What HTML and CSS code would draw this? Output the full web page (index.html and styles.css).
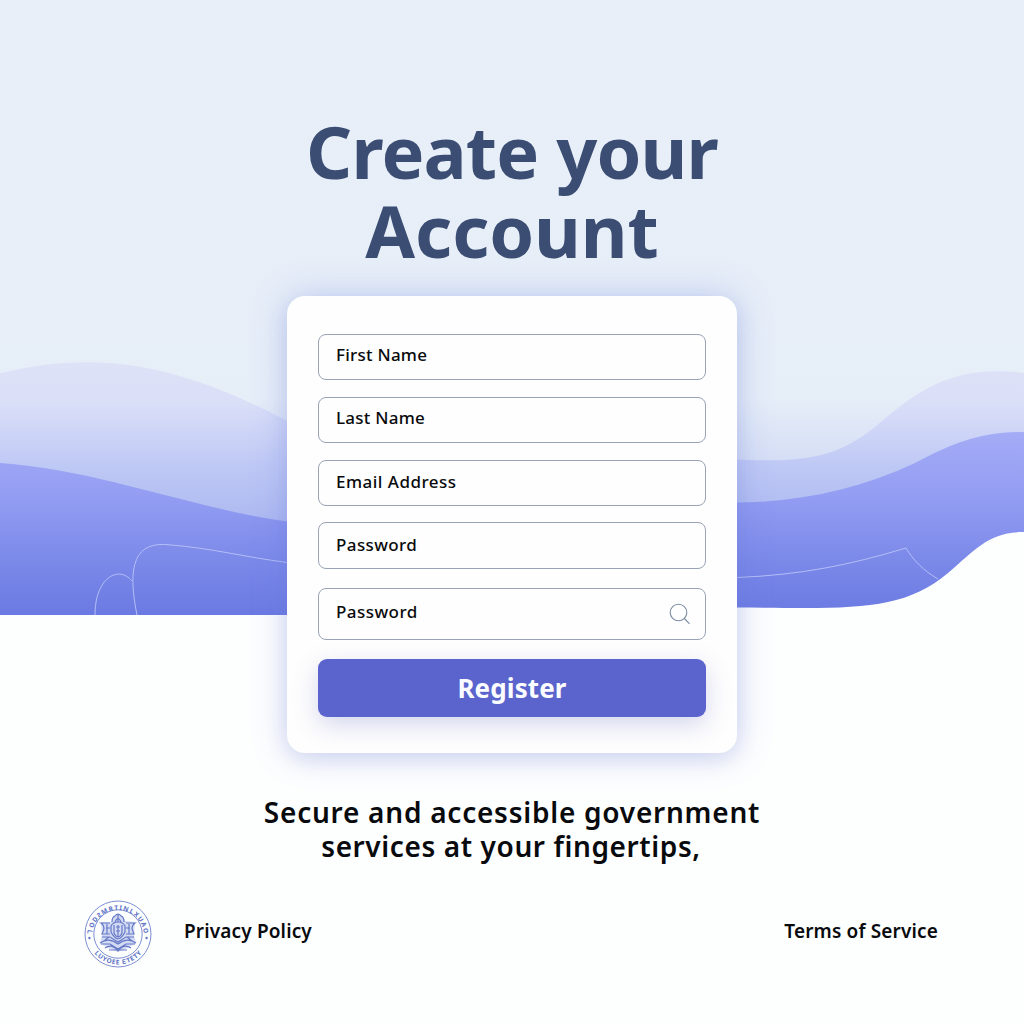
FILE: index.html
```html
<!DOCTYPE html>
<html lang="en">
<head>
<meta charset="utf-8">
<title>Create your Account</title>
<link rel="stylesheet" href="styles.css">
</head>
<body>
<svg class="backdrop" viewBox="0 0 1024 1024" aria-hidden="true">
  <defs>
    <linearGradient id="sky" gradientUnits="userSpaceOnUse" x1="0" y1="0" x2="0" y2="480">
      <stop offset="0" stop-color="#e8eff8"/><stop offset=".83" stop-color="#e6eef8"/><stop offset="1" stop-color="#d0d9f4"/>
    </linearGradient>
    <linearGradient id="mist" gradientUnits="userSpaceOnUse" x1="0" y1="362" x2="0" y2="520">
      <stop offset="0" stop-color="#dde2f7"/><stop offset=".26" stop-color="#dadff8"/><stop offset=".65" stop-color="#bfc9f5"/><stop offset="1" stop-color="#adb9f1"/>
    </linearGradient>
    <linearGradient id="wave" gradientUnits="userSpaceOnUse" x1="0" y1="432" x2="0" y2="615">
      <stop offset="0" stop-color="#a4acf6"/><stop offset=".35" stop-color="#939df2"/><stop offset=".7" stop-color="#7b89e9"/><stop offset="1" stop-color="#6b7ae2"/>
    </linearGradient>
  </defs>
  <path fill="url(#sky)" d="M0 0H1024V480H0Z"/>
  <path fill="url(#mist)" d="M0 373.500C100 349 180 365 287 421C400 480 620 460 737 459.500C800 462 834 460 875 427C915 393 950 364 1024 373V500L737 525H287L0 500Z"/>
  <path fill="url(#wave)" d="M0 463C100 470 190 508 287 521.500C420 540 620 504 737 502.500C800 502 860 489 915 463C953 443 980 432 1024 432V532C989 532 976 549 948 573C900 613 850 608 737 607.500L287 615H0Z"/>
  <g class="contours">
    <path d="M95 615C95 577 119 565 132 581"/>
    <path d="M137 615C127 566 134 540 171 545C210 548 245 557 287 562.500"/>
    <path d="M737 577.500C800 575 850 565 906 548C913 560 924 571 938 579"/>
  </g>
</svg>
<main class="page">
  <h1 class="title"><span>Create your</span><span class="title-second">Account</span></h1>
  <form class="card">
    <div class="field">First Name</div>
    <div class="field">Last Name</div>
    <div class="field field-email">Email Address</div>
    <div class="field field-password">Password</div>
    <div class="field field-confirm">Password
      <svg class="search" viewBox="0 0 22 22"><circle cx="10.500" cy="9.500" r="8.300"/><path d="M16 15L21.500 20.800"/></svg>
    </div>
    <button class="register" type="button">Register</button>
  </form>
  <p class="tagline"><span>Secure and accessible government</span><span class="tagline-second">services at your fingertips,</span></p>
  <footer class="footer">
    <svg class="seal" viewBox="0 0 68 68">
      <defs>
        <path id="arc-top" d="M8 36A26 26 0 1 1 60 36"/>
        <path id="arc-bottom" d="M3.500 34A30.500 30.500 0 0 0 64.500 34"/>
      </defs>
      <circle cx="34" cy="34" r="33"/>
      <circle cx="34" cy="34" r="24.200"/>
      <text class="seal-text"><textPath href="#arc-top" startOffset="50%" textLength="76">ꓶODƧMRTINLXUAO</textPath></text>
      <text class="seal-text"><textPath href="#arc-bottom" startOffset="50%" textLength="54">LUYOEE ƐTETY</textPath></text>
      <circle class="solid" cx="5.400" cy="38" r="1.200"/><circle class="solid" cx="62.600" cy="38" r="1.200"/>
      <path class="crest-fill" d="M28 21Q28 15 34 14Q40 15 41 21L51 22L50 35L52 43L44 48L34 52L24 48L16 43L18 35L17 22H27Z"/>
      <g class="crest">
        <path d="M28 22Q28 17 31 16Q34 12 37 16Q40 17 40 22M31 22Q34 15 37 22M34 14V22"/>
        <path d="M27 26Q29 22 34 22Q39 22 41 26V32Q38 38 34 39Q30 38 27 32ZM30 25V33Q32 37 34 37Q36 37 38 33V25M32 27H36M32 31H36M34 25V37"/>
        <path d="M26 23H17Q20 25 20 29L18 34H26M23 24V34M26 28H22"/>
        <path d="M42 23H51Q48 25 48 29L50 34H42M45 24V34M42 28H46"/>
        <path d="M18 37H26L34 42L42 37H50M16 43Q25 37 34 44Q43 37 52 43M17 44H26L34 49L42 44H51M21 48Q28 43 34 51Q40 43 47 48M25 50H43M25 37L20 41M43 37L48 41"/>
      </g>
    </svg>
    <a class="link">Privacy Policy</a>
    <a class="link link-terms">Terms of Service</a>
  </footer>
</main>
</body>
</html>
```
FILE: styles.css
```css
* { box-sizing: border-box; }

body {
  margin: 0;
  background: #fdfefe;
  color: #080a0d;
  font-family: "Noto Sans", sans-serif;
}

/* The scenery lies behind the page content. */
.backdrop {
  position: absolute;
  z-index: -1;
  top: 0;
  left: 0;
  width: 1024px;
  height: 1024px;
}

.contours {
  fill: none;
  stroke: #b4bff7;
  stroke-width: 1;
}

.page {
  display: flex;
  flex-direction: column;
  align-items: center;
  width: 1024px;
  height: 1024px;
  padding-top: 112px;
}

.title {
  height: 184px;
  margin: 0;
  color: #3b4d73;
  font-size: 72px;
  font-weight: 700;
  line-height: 78.5px;
  letter-spacing: -.85px;
  text-align: center;
}

.title span,
.tagline span { display: block; }

.title .title-second { letter-spacing: -.1px; }

.card {
  display: flex;
  flex-direction: column;
  gap: 17px;
  width: 450px;
  height: 457px;
  padding: 38px 31px 36px;
  border-radius: 18px;
  background: #fefefe;
  box-shadow: 0 0 36px rgba(105, 123, 225, .28), 0 7px 20px rgba(105, 123, 195, .16);
}

.field {
  display: flex;
  flex: none;
  align-items: center;
  height: 46px;
  padding: 0 15px 5px 17px;
  border: 1px solid #98a3b5;
  border-radius: 8px;
  font-size: 17px;
  font-weight: 500;
  letter-spacing: .25px;
}

.field-email {
  padding-bottom: 3px;
  letter-spacing: .48px;
}

.field-password {
  height: 47px;
  margin-top: -1px;
  padding-bottom: 2px;
  letter-spacing: .4px;
}

.field-confirm {
  justify-content: space-between;
  height: 52px;
  margin-top: 2px;
  padding-bottom: 6px;
  letter-spacing: .45px;
}

.search {
  width: 22px;
  height: 22px;
  margin-top: 6px;
  overflow: visible;
  fill: none;
  stroke: #7d8da3;
  stroke-width: 1.1;
}

.register {
  flex: none;
  width: 388px;
  height: 58px;
  margin-top: 2px;
  padding: 0;
  border: 0;
  border-radius: 9px;
  background: #5b64cc;
  box-shadow: 0 8px 24px rgba(91, 100, 190, .26);
  color: #fafcff;
  font: 700 26px/56px "Noto Sans", sans-serif;
  letter-spacing: .1px;
}

.tagline {
  margin: 42px 0 0;
  font-size: 28px;
  font-weight: 600;
  line-height: 34px;
  letter-spacing: .76px;
  text-align: center;
}

.tagline .tagline-second {
  padding-right: 2px;
  letter-spacing: .6px;
}

.footer {
  display: flex;
  align-items: center;
  width: 856px;
  height: 68px;
  margin-top: 37px;
}

.seal {
  width: 68px;
  height: 68px;
  fill: none;
  stroke: #6e80cc;
  stroke-width: .9;
}

.seal-text {
  fill: #5c70c5;
  stroke: none;
  font-size: 6.5px;
  font-weight: 700;
  text-anchor: middle;
}

.solid { fill: #6679c7; stroke: none; }

.crest-fill { fill: #d3daf3; stroke: none; }

.crest { stroke: #6679c7; stroke-width: 1.2; }

.link {
  margin: 0 0 6px 32px;
  font-size: 19px;
  font-weight: 600;
  letter-spacing: .15px;
}

.link-terms { margin: 0 2px 6px auto; }
```
